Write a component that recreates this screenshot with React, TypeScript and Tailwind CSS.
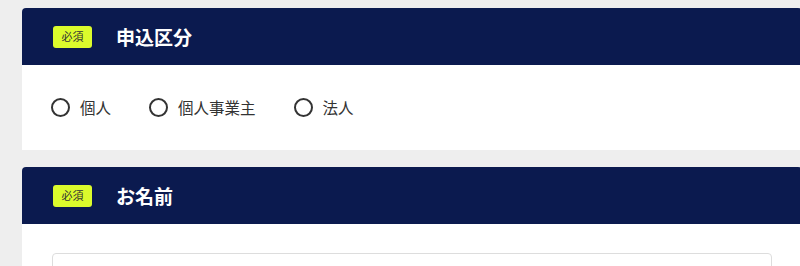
const jp = { fontFamily: '"Noto Sans CJK JP", "Noto Sans", sans-serif' }

function SectionHeader({ title }: { title: string }) {
  return (
    <div className="flex h-[57px] items-center bg-[#0b1a4f] pl-[31px]">
      <span className="flex h-[22px] w-[39px] items-center justify-center rounded-[3px] bg-[#dcfb2c] text-[11px] leading-none text-[#333]">
        必須
      </span>
      <h2 className="ml-[24px] text-[19px] font-bold leading-none text-white">{title}</h2>
    </div>
  )
}

function Radio({ label }: { label: string }) {
  return (
    <label className="flex items-center gap-[10px] text-[15.5px] leading-none text-[#333]">
      <span className="h-[19px] w-[19px] rounded-full border-2 border-[#333] bg-white" />
      {label}
    </label>
  )
}

export default function App() {
  return (
    <div className="h-[266px] w-[800px] overflow-hidden bg-[#eeeeee] pl-[22px] pt-[8px]" style={jp}>
      <div className="w-[780px] overflow-hidden rounded-t-[4px] bg-white">
        <SectionHeader title="申込区分" />
        <div className="flex h-[85px] items-center gap-[38px] pl-[29px]">
          <Radio label="個人" />
          <Radio label="個人事業主" />
          <Radio label="法人" />
        </div>
      </div>

      <div className="mt-[17px] w-[780px] overflow-hidden rounded-t-[4px] bg-white">
        <SectionHeader title="お名前" />
        <div className="px-[30px] pt-[29px]">
          <div className="h-[48px] rounded-[4px] border border-[#dddddd] bg-white" />
        </div>
      </div>
    </div>
  )
}
